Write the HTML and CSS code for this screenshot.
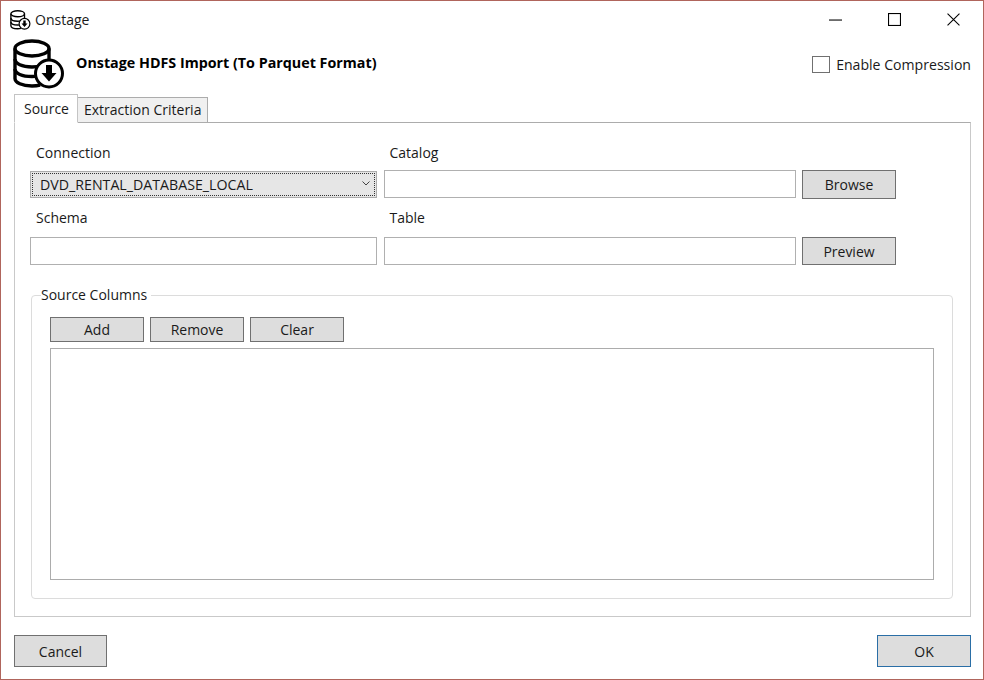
FILE: index.html
```html
<!DOCTYPE html>
<html lang="en">
<head>
    <meta charset="UTF-8">
    <title>Onstage</title>
    <link rel="stylesheet" href="styles.css">
</head>
<body>
    <svg class="defs" width="0" height="0">
        <symbol id="db-icon" viewBox="0 0 52 50">
            <g fill="none" stroke="#000" stroke-width="3.4">
                <ellipse cx="19" cy="9.5" rx="17" ry="7.5"/>
                <path d="M2 9.5V39.5C2 43.5 9 47 19 47C22 47 25 46.6 27 46"/>
                <path d="M36 9.5V20"/>
                <path d="M2 20C2 24.5 9 28 19 28C23 28 26 27.4 29 26.4"/>
                <path d="M2 30C2 34.5 9 37.5 19 37.5C20 37.5 21 37.5 22 37.4"/>
            </g>
            <circle cx="36" cy="34.5" r="13.5" fill="#fff" stroke="#000" stroke-width="3"/>
            <path d="M33 26H39V34H43.5L36 42.5L28.5 34H33Z" fill="#000"/>
        </symbol>
    </svg>

    <div class="window">
        <div class="titlebar">
            <svg class="title-icon"><use href="#db-icon"/></svg>
            <span class="title-text">Onstage</span>
            <div class="window-controls">
                <svg class="control" viewBox="0 0 12 12"><path d="M0 6.5H12" stroke="#000"/></svg>
                <svg class="control" viewBox="0 0 12 12"><rect x=".5" y=".5" width="11" height="11" fill="none" stroke="#000"/></svg>
                <svg class="control" viewBox="0 0 12 12"><path d="M.5 .5L11.5 11.5M11.5 .5L.5 11.5" stroke="#000"/></svg>
            </div>
        </div>

        <div class="header">
            <svg class="logo"><use href="#db-icon"/></svg>
            <h1>Onstage HDFS Import (To Parquet Format)</h1>
            <label class="compression">
                <span class="checkbox"></span>
                Enable Compression
            </label>
        </div>

        <div class="tabs">
            <div class="tab active">Source</div>
            <div class="tab">Extraction Criteria</div>
        </div>

        <div class="panel">
            <div class="fields">
                <div class="field field-top">
                    <label>Connection</label>
                    <div class="select-wrap">
                        <select class="combo">
                            <option>DVD_RENTAL_DATABASE_LOCAL</option>
                        </select>
                        <svg class="chevron" viewBox="0 0 8 5"><path d="M.5 .5L4 4L7.5 .5" fill="none" stroke="#444"/></svg>
                    </div>
                </div>
                <div class="field field-top">
                    <label>Catalog</label>
                    <input type="text">
                </div>
                <button class="btn btn-browse">Browse</button>
                <div class="field">
                    <label>Schema</label>
                    <input type="text">
                </div>
                <div class="field">
                    <label>Table</label>
                    <input type="text">
                </div>
                <button class="btn btn-preview">Preview</button>
            </div>

            <fieldset class="group">
                <legend>Source Columns</legend>
                <div class="group-buttons">
                    <button class="btn btn-small">Add</button>
                    <button class="btn btn-small">Remove</button>
                    <button class="btn btn-small">Clear</button>
                </div>
                <div class="listbox"></div>
            </fieldset>
        </div>

        <div class="footer">
            <button class="btn btn-footer">Cancel</button>
            <button class="btn btn-footer btn-default">OK</button>
        </div>
    </div>
</body>
</html>
```

FILE: styles.css
```css
* {
    box-sizing: border-box;
}
html, body {
    margin: 0;
    padding: 0;
}
body {
    font-family: "Open Sans", "Noto Sans", sans-serif;
    font-size: 14px;
    color: #1a1a1a;
    background-color: #fff;
}
.defs {
    position: absolute;
}
.window {
    width: 984px;
    height: 680px;
    border: 1px solid #b0655c;
    padding: 0 12px 0 13px;
    display: flex;
    flex-direction: column;
}
.titlebar {
    height: 37px;
    display: flex;
    align-items: center;
    margin-left: -4px;
}
.title-icon {
    width: 21px;
    height: 20px;
    margin-right: 4px;
}
.title-text {
    font-size: 14px;
}
.window-controls {
    margin-left: auto;
    margin-right: 11px;
    display: flex;
    gap: 46px;
}
.control {
    width: 13px;
    height: 13px;
}
.header {
    height: 56px;
    display: flex;
    align-items: flex-start;
}
.logo {
    width: 52px;
    height: 50px;
    margin: 1px 0 0 -1px;
}
h1 {
    font-size: 14.3px;
    font-weight: 700;
    margin: 15px 0 0 11px;
    color: #000;
}
.compression {
    margin-left: auto;
    margin-top: 17px;
    display: flex;
    align-items: center;
    gap: 6px;
    font-size: 14.1px;
    white-space: nowrap;
}
.checkbox {
    width: 18px;
    height: 17px;
    border: 1px solid #707070;
}
.tabs {
    display: flex;
    align-items: flex-end;
    height: 29px;
    margin-bottom: -1px;
    position: relative;
}
.tab {
    height: 26px;
    padding: 0 6px;
    line-height: 24px;
    background-color: #f0f0f0;
    border: 1px solid #acacac;
    border-left: none;
    white-space: nowrap;
}
.tab.active {
    height: 29px;
    width: 64px;
    padding: 0 9px;
    line-height: 27px;
    background-color: #fff;
    border: 1px solid #c4c4c4;
    border-bottom: 1px solid #fff;
}
.panel {
    width: 957px;
    height: 495px;
    border: 1px solid #c9c9c9;
    border-top-color: #acacac;
    padding: 20px 0 0 15px;
}
.fields {
    display: grid;
    grid-template-columns: 347px 412px 94px;
    column-gap: 6.5px;
    row-gap: 10px;
    align-items: end;
    justify-content: start;
}
.field label {
    display: block;
    margin: 0 0 9px 6px;
    line-height: 20px;
}
.field-top label {
    margin-bottom: 7px;
}
input {
    display: block;
    width: 100%;
    height: 28px;
    border: 1px solid #b0b0b0;
    background-color: #fff;
}
.select-wrap {
    position: relative;
    padding-top: 1px;
}
.combo {
    appearance: none;
    display: block;
    width: 100%;
    height: 27px;
    padding: 0 0 0 9px;
    font-family: inherit;
    font-size: 14.2px;
    color: #1a1a1a;
    background-color: #e6e6e6;
    border: 1px solid #acacac;
    outline: 1px dotted #333;
    outline-offset: -3px;
    border-radius: 0;
}
.chevron {
    position: absolute;
    right: 7px;
    top: 11px;
    width: 8px;
    height: 5px;
}
.btn {
    font-family: inherit;
    font-size: 14px;
    color: #1a1a1a;
    background-color: #dddddd;
    border: 1px solid #707070;
    padding: 0;
    border-radius: 0;
}
.btn-browse {
    width: 94px;
    height: 29px;
    margin-bottom: -1px;
}
.btn-preview {
    width: 94px;
    height: 28px;
}
.group {
    width: 922px;
    height: 314px;
    margin: 20px 0 0 1px;
    padding: 12px 18px 0 18px;
    border: 1px solid #dcdcdc;
    border-radius: 4px;
}
.group legend {
    padding: 0 4px 0 0;
    margin-left: -9px;
    line-height: 20px;
}
.group-buttons {
    display: flex;
    gap: 6px;
    margin-bottom: 6px;
}
.btn-small {
    width: 94px;
    height: 25px;
}
.listbox {
    width: 884px;
    height: 232px;
    border: 1px solid #acacac;
    background-color: #fff;
}
.footer {
    display: flex;
    justify-content: space-between;
    width: 957px;
    margin-top: 18px;
}
.btn-footer {
    width: 93px;
    height: 32px;
}
.btn-default {
    width: 94px;
    border-color: #2a6ea6;
}
```
